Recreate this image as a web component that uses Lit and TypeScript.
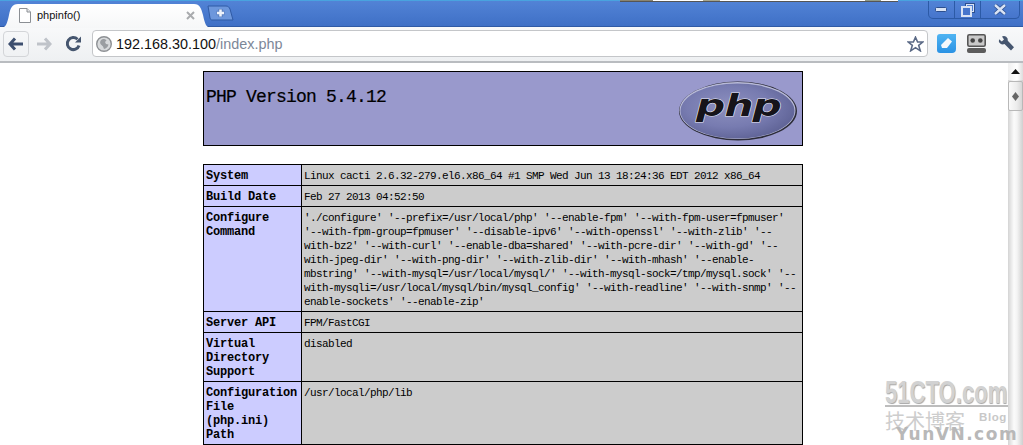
import { LitElement, html, css } from "lit";
import { customElement } from "lit/decorators.js";

const configure = [
  "'./configure' '--prefix=/usr/local/php' '--enable-fpm' '--with-fpm-user=fpmuser'",
  "'--with-fpm-group=fpmuser' '--disable-ipv6' '--with-openssl' '--with-zlib' '--",
  "with-bz2' '--with-curl' '--enable-dba=shared' '--with-pcre-dir' '--with-gd' '--",
  "with-jpeg-dir' '--with-png-dir' '--with-zlib-dir' '--with-mhash' '--enable-",
  "mbstring' '--with-mysql=/usr/local/mysql/' '--with-mysql-sock=/tmp/mysql.sock' '--",
  "with-mysqli=/usr/local/mysql/bin/mysql_config' '--with-readline' '--with-snmp' '--",
  "enable-sockets' '--enable-zip'",
];

const rows: [string[], string[]][] = [
  [["System"], ["Linux cacti 2.6.32-279.el6.x86_64 #1 SMP Wed Jun 13 18:24:36 EDT 2012 x86_64"]],
  [["Build Date"], ["Feb 27 2013 04:52:50"]],
  [["Configure", "Command"], configure],
  [["Server API"], ["FPM/FastCGI"]],
  [["Virtual", "Directory", "Support"], ["disabled"]],
  [["Configuration", "File", "(php.ini)", "Path"], ["/usr/local/php/lib"]],
];

@customElement("app-root")
export class AppRoot extends LitElement {
  static styles = css`
    :host { display: flex; flex-direction: column; width: 1023px; height: 445px; overflow: hidden; position: relative; background: #fff; font-family: "Liberation Sans", Arial, sans-serif; }
    .titlebar { height: 27px; flex: none; display: flex; background: linear-gradient(#5283d6, #3f70c6); border-top: 1px solid #49a3df; border-bottom: 1px solid #2f5aa5; box-sizing: border-box; position: relative; }
    .strip { position: absolute; left: 620px; top: -1px; width: 278px; height: 2px; background: linear-gradient(90deg, #8a8470 0 12%, #fff 12% 30%, #a6a68e 30% 36%, #fff 36% 88%, #8f9a88 88% 94%, #fff 94%); border-bottom: 1px solid #555; box-sizing: border-box; }
    .tabs { display: flex; flex: 1; align-items: flex-start; }
    .tab { width: 212px; height: 24px; margin-top: 2px; position: relative; flex: none; display: flex; align-items: center; color: #111; font-size: 11px; }
    .tab svg.bg { position: absolute; left: 0; top: 0; }
    .tab .fav { position: relative; margin-left: 19px; }
    .tab .name { position: relative; margin-left: 6px; flex: 1; }
    .tab .x { position: relative; margin-right: 17px; }
    .newtab { margin: 4px 0 0 -5px; }
    .win { width: 92px; height: 18px; margin: 0 3px 0 0; display: flex; border: 1px solid #2c5aa6; border-top: none; border-radius: 0 0 5px 5px; box-sizing: border-box; background: linear-gradient(#5283d6, #4675cc); }
    .win div { display: flex; align-items: center; justify-content: center; border-right: 1px solid #2c5aa6; }
    .win div:last-child { border-right: none; }
    .toolbar { height: 36px; flex: none; display: flex; align-items: center; box-sizing: border-box; background: linear-gradient(#f8f9fa, #eef0f2); border-bottom: 2px solid #b9bcc0; padding-left: 3px; padding-bottom: 1px; }
    .nav { width: 26px; height: 26px; display: flex; align-items: center; justify-content: center; box-sizing: border-box; flex: none; }
    .nav.back { border: 1px solid #d3d5d8; border-radius: 4px; margin-right: 2px; }
    .nav.fwd { margin-right: 3px; }
    .url { width: 836px; height: 27px; margin-left: 6px; box-sizing: border-box; flex: none; background: #fff; border: 1px solid #c4c6c9; border-radius: 4px; display: flex; align-items: center; padding-left: 3px; font-size: 14.4px; color: #111; }
    .url .host { margin-left: 4px; }
    .url .path { color: #7c8798; flex: 1; }
    .url .star { margin-right: 3px; }
    .ext { display: flex; align-items: center; flex: none; }
    .main { flex: 1; display: flex; min-height: 0; }
    .page { flex: 1; min-width: 0; display: flex; flex-direction: column; align-items: flex-start; padding: 8px 0 0 203px; box-sizing: border-box; font-family: "Liberation Mono", monospace; font-size: 11px; letter-spacing: -0.6px; color: #000; }
    .head { width: 600px; height: 75px; flex: none; box-sizing: border-box; border: 1px solid #000; background: #9999cc; display: flex; justify-content: space-between; padding: 3px 3px 0 2px; }
    .head h1 { margin: 12px 0 0 0; font-size: 18px; line-height: 20px; font-weight: normal; letter-spacing: -0.8px; -webkit-text-stroke: 0.2px #000; }
    table { border-collapse: collapse; width: 600px; margin-top: 18px; table-layout: fixed; flex: none; }
    td { border: 1px solid #000; padding: 4px 2px 2px 2px; line-height: 14px; vertical-align: top; white-space: pre; }
    td.e { width: 93px; background: #ccccff; font-weight: bold; font-size: 12px; letter-spacing: -0.2px; }
    td.v { background: #cccccc; }
    .line { display: block; }
    .scroll { width: 15px; flex: none; display: flex; flex-direction: column; background: linear-gradient(90deg, #d4d4d4, #fbfbfb 40%, #f4f4f4 60%, #cfcfcf); }
    .sbtn { height: 17px; flex: none; display: flex; align-items: center; justify-content: center; background: linear-gradient(90deg, #f0f0f0, #fff 60%, #ddd); }
    .thumb { height: 30px; margin-top: 1px; box-sizing: border-box; flex: none; display: flex; align-items: center; justify-content: center; border: 1px solid #b8b8b8; border-radius: 2px; background: linear-gradient(90deg, #fafafa, #ececec 60%, #d6d6d6); }
    .wm { position: absolute; left: 885px; top: 376px; width: 138px; height: 69px; pointer-events: none; font-weight: bold; }
    .wm .a { font-size: 32px; line-height: 32px; color: #d2d2d2; text-shadow: 1px 1px 1px #a8a8a8; transform: scaleX(0.69); transform-origin: 0 0; white-space: nowrap; width: 178px; }
    .wm .rule { position: absolute; left: 0; top: 29px; width: 123px; height: 2px; background: #bdbdbd; }
    .wm .b { position: absolute; left: 0; top: 33px; font-family: "Noto Sans CJK SC", sans-serif; font-size: 20px; line-height: 24px; font-weight: 400; color: #cdcdcd; }
    .wm .c { position: absolute; left: 94px; top: 35px; font-size: 11.5px; line-height: 13px; letter-spacing: 0.6px; color: #c8c8c8; }
    .wm .d { position: absolute; left: 11px; top: 48px; font-size: 17px; line-height: 20px; letter-spacing: 1.5px; color: #b8b8b8; white-space: nowrap; font-family: "DejaVu Sans", sans-serif; }
  `;

  private logo() {
    return html`<svg width="122" height="66" viewBox="0 0 122 66">
      <defs>
        <radialGradient id="g" cx="0.42" cy="0.42" r="0.62">
          <stop offset="0" stop-color="#8d90bf"/><stop offset="0.6" stop-color="#777bb0"/><stop offset="1" stop-color="#5f6396"/>
        </radialGradient>
      </defs>
      <ellipse cx="61" cy="36" rx="59" ry="29.5" fill="#2b2b38"/>
      <ellipse cx="60.5" cy="35.5" rx="58" ry="28.5" fill="#b9bbd8"/>
      <ellipse cx="60.5" cy="36" rx="57" ry="27.5" fill="url(#g)"/>
      <text x="19" y="41" textLength="85" lengthAdjust="spacingAndGlyphs" font-family="DejaVu Sans, sans-serif" font-weight="bold" font-style="italic" font-size="31" fill="#16141a" stroke="#e8e8f2" stroke-width="1" paint-order="stroke">php</text>
    </svg>`;
  }

  render() {
    return html`
      <div class="titlebar">
        <div class="strip"></div>
        <div class="tabs">
          <div class="tab">
            <svg class="bg" width="212" height="25" viewBox="0 0 212 25"><path d="M0 25C6 25 7 21 9 12C10.500 5 12 1 18 1H194C200 1 201 5 203 12C205 21 206 25 212 25Z" fill="url(#tabg)"/><defs><linearGradient id="tabg" x1="0" y1="0" x2="0" y2="1"><stop offset="0" stop-color="#fff"/><stop offset="1" stop-color="#f6f7f8"/></linearGradient></defs></svg>
            <svg class="fav" width="12" height="15" viewBox="0 0 12 15"><path d="M.5.5H8L11.500 4V14.500H.5Z" fill="#fff" stroke="#8b8f94"/><path d="M8 .5V4H11.500" fill="#e6e7e9" stroke="#8b8f94"/></svg>
            <span class="name">phpinfo()</span>
            <svg class="x" width="9" height="9" viewBox="0 0 9 9"><path d="M1 1L8 8M8 1L1 8" stroke="#a9abae" stroke-width="2"/></svg>
          </div>
          <svg class="newtab" width="27" height="16" viewBox="0 0 27 16"><path d="M1 1H19C21 1 22 2 23 4L26 15H5C4 15 3.500 14.500 3 13Z" fill="#6d97dc" stroke="#2f5aa5"/><path d="M13.500 4V12M9.500 8H17.500" stroke="#5a7fbe" stroke-width="4.500"/><path d="M13.500 4.500V11.500M10 8H17" stroke="#eef3fb" stroke-width="2.500"/></svg>
        </div>
        <div class="win">
          <div style="width:25px"><svg width="13" height="7" viewBox="0 0 13 7"><rect x=".5" y="1.500" width="11" height="4" rx="1" fill="#d9e3f4" stroke="#2c4f8f"/></svg></div>
          <div style="width:25px"><svg width="14" height="14" viewBox="0 0 14 14"><rect x="4.500" y=".5" width="9" height="9" fill="none" stroke="#2c4f8f"/><rect x="5.500" y="1.500" width="7" height="7" fill="none" stroke="#d9e3f4"/><rect x="1" y="4" width="9" height="9" fill="#4675cc" stroke="#d9e3f4" stroke-width="2"/></svg></div>
          <div style="flex:1"><svg width="14" height="11" viewBox="0 0 14 11"><path d="M2 1L12 10M12 1L2 10" stroke="#2c4f8f" stroke-width="4"/><path d="M2 1L12 10M12 1L2 10" stroke="#d9e3f4" stroke-width="2.400"/></svg></div>
        </div>
      </div>
      <div class="toolbar">
        <div class="nav back"><svg width="16" height="14" viewBox="0 0 16 14"><path d="M7 1.500L2 7L7 12.500M2.500 7H15" fill="none" stroke="#3d4f6f" stroke-width="3"/></svg></div>
        <div class="nav fwd"><svg width="16" height="14" viewBox="0 0 16 14"><path d="M9 1.500L14 7L9 12.500M13.500 7H1" fill="none" stroke="#bfc3c9" stroke-width="3"/></svg></div>
        <div class="nav"><svg width="17" height="17" viewBox="0 0 17 17"><path d="M14 10.500A6 6 0 1 1 12.500 4.300" fill="none" stroke="#46566f" stroke-width="3"/><path d="M10 7.500H16V1.500Z" fill="#46566f"/></svg></div>
        <div class="url">
          <svg width="16" height="16" viewBox="0 0 16 16"><circle cx="8" cy="8" r="7.300" fill="#d8dadc" stroke="#8d9094" stroke-width="1.400"/><path d="M7 3C4.500 3.500 3.500 6 4.500 8L7 10.500L8 13C10 12.500 12 11 12.500 8.500L10 8L9 6L10.500 4.500C9.500 3.300 8.200 2.900 7 3Z" fill="#9a9da1"/></svg>
          <span class="host">192.168.30.100</span><span class="path">/index.php</span>
          <svg class="star" width="17" height="16" viewBox="0 0 17 16"><path d="M8.500 1.200L10.600 6H15.800L11.700 9.400L13.300 14.800L8.500 11.700L3.700 14.800L5.300 9.400L1.200 6H6.400Z" fill="#fff" stroke="#5b6a86" stroke-width="1.600"/></svg>
        </div>
        <div class="ext">
          <svg style="margin-left:9px" width="19" height="19" viewBox="0 0 19 19"><defs><linearGradient id="e" x1="0" y1="0" x2="0" y2="1"><stop offset="0" stop-color="#4fb4f2"/><stop offset="1" stop-color="#2a92e4"/></linearGradient></defs><path d="M3 0H19V15C19 17.500 17.500 19 15 19H3C1 19 0 18 0 16V3C0 1 1 0 3 0Z" fill="url(#e)"/><path d="M4 11L11 4L15 7.500L10 14H5Z" fill="#f4f8fc"/></svg>
          <svg style="margin-left:11px" width="19" height="19" viewBox="0 0 19 19"><rect x=".8" y=".8" width="17.400" height="11.400" rx="1.500" fill="#c9c9c9" stroke="#555" stroke-width="1.600"/><circle cx="5.700" cy="6.500" r="2.300" fill="#444"/><circle cx="13.300" cy="6.500" r="2.300" fill="#444"/><rect x="0" y="14" width="19" height="5" rx="2" fill="#5c5c5c"/></svg>
          <svg style="margin-left:12px" width="17" height="17" viewBox="0 0 17 17"><path d="M4 1.500A4 4 0 0 1 9.800 5.700L16 12.200L13 15.500L6.500 9A4 4 0 0 1 1 4.200L3.800 6.500L6 4.500Z" fill="#46566f"/></svg>
        </div>
      </div>
      <div class="main">
        <div class="page">
          <div class="head"><h1>PHP Version 5.4.12</h1>${this.logo()}</div>
          <table>
            ${rows.map(([k, v]) => html`<tr>
              <td class="e">${k.map((l) => html`<span class="line">${l}</span>`)}</td>
              <td class="v">${v.map((l) => html`<span class="line">${l}</span>`)}</td>
            </tr>`)}
          </table>
        </div>
        <div class="scroll">
          <div class="sbtn"><svg width="9" height="5" viewBox="0 0 9 5"><path d="M4.500 0L9 5H0Z" fill="#111"/></svg></div>
          <div class="thumb"><svg width="9" height="9" viewBox="0 0 9 9"><path d="M4.500 0L8 4.500L4.500 9L1 4.500Z" fill="#666"/></svg></div>
        </div>
      </div>
      <div class="wm">
        <div class="a">51CTO.com</div>
        <div class="rule"></div>
        <div class="b">技术博客</div>
        <div class="c">Blog</div>
        <div class="d">YunVN.com</div>
      </div>
    `;
  }
}
